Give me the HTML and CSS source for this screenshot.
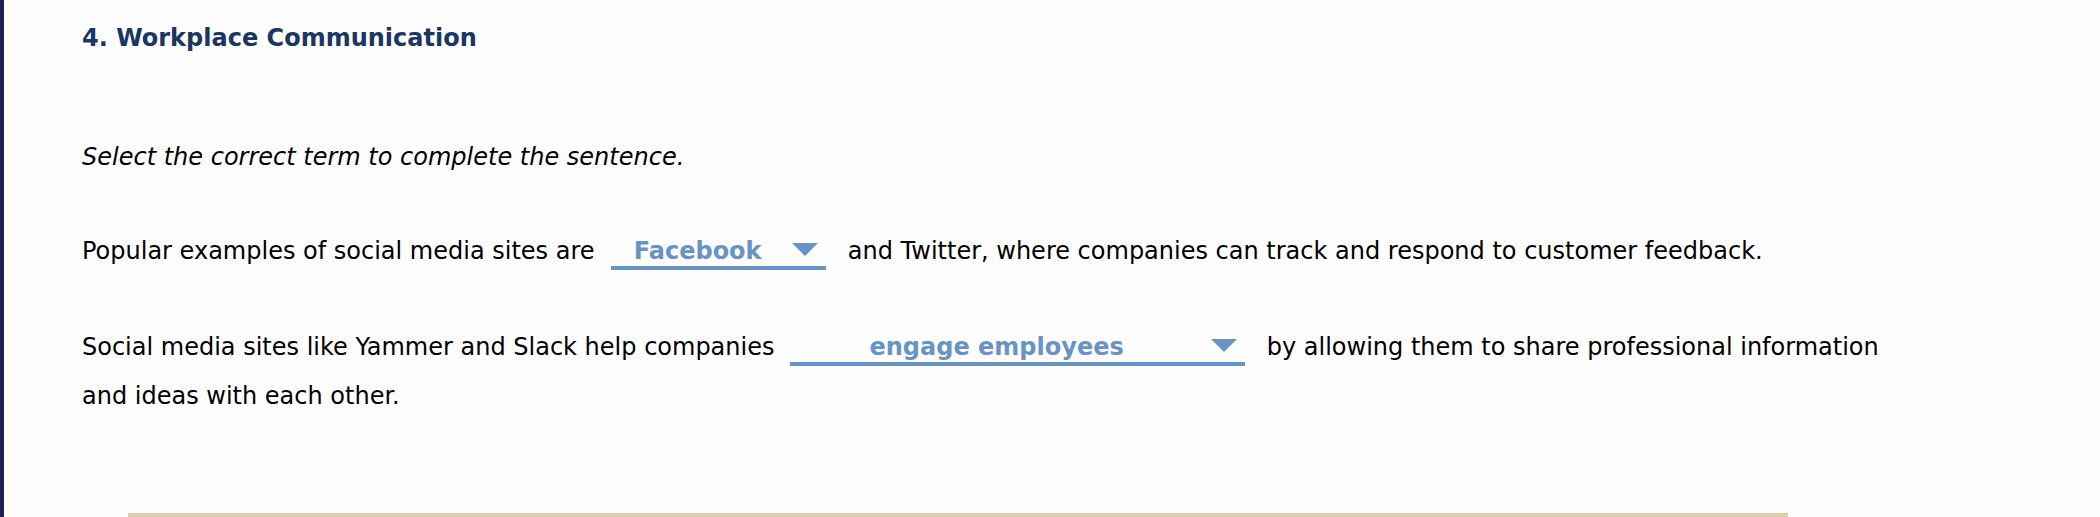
FILE: index.html
```html
<!DOCTYPE html>
<html lang="en">
<head>
<meta charset="utf-8">
<title>Workplace Communication</title>
<link rel="stylesheet" href="styles.css">
</head>
<body>
<div class="page">
  <div class="content">
    <h1 class="title">4. Workplace Communication</h1>
    <p class="instruction">Select the correct term to complete the sentence.</p>
    <p class="sentence">Popular examples of social media sites are <span class="select select-short"><span class="select-value">Facebook</span><span class="select-arrow"></span></span> and Twitter, where companies can track and respond to customer feedback.</p>
    <p class="sentence">Social media sites like Yammer and Slack help companies <span class="select select-long"><span class="select-value">engage employees</span><span class="select-arrow"></span></span> by allowing them to share professional information and ideas with each other.</p>
    <div class="divider"></div>
  </div>
</div>
</body>
</html>
```

FILE: styles.css
```css
html, body {
  margin: 0;
  padding: 0;
  background: #fdfdfd;
}

body {
  font-family: "DejaVu Sans", Verdana, sans-serif;
  color: #000;
  overflow: hidden;
}

.page {
  min-height: 517px;
  border-left: 4px solid #1d1f55;
  box-sizing: border-box;
}

.content {
  padding: 24px 0 0 78px;
  width: 1818px;
}

.title {
  margin: 0;
  font-size: 24px;
  line-height: 28px;
  font-weight: bold;
  color: #1a3762;
}

.instruction {
  margin: 82px 0 0 0;
  font-size: 24px;
  line-height: 47px;
  font-style: italic;
}

.sentence {
  margin: 46px 0 0 0;
  font-size: 24px;
  line-height: 49px;
}

.sentence + .sentence {
  margin-top: 47px;
}

.select {
  display: inline-flex;
  align-items: flex-start;
  box-sizing: border-box;
  border-bottom: 4px solid #6894c5;
  margin: 0 14px 0 8px;
  line-height: 30px;
  color: #6894c5;
  font-weight: bold;
}

.select-short {
  width: 215px;
  margin-left: 9px;
}

.select-long {
  width: 455px;
}

.select-value {
  flex: 1;
  text-align: center;
}

.select-arrow {
  width: 0;
  height: 0;
  margin: 7px 8px 0 8px;
  border-left: 13px solid transparent;
  border-right: 13px solid transparent;
  border-top: 13px solid #6894c5;
}

.divider {
  margin: 92px 0 0 46px;
  width: 1660px;
  height: 4px;
  background: #d9cfa9;
}
```
